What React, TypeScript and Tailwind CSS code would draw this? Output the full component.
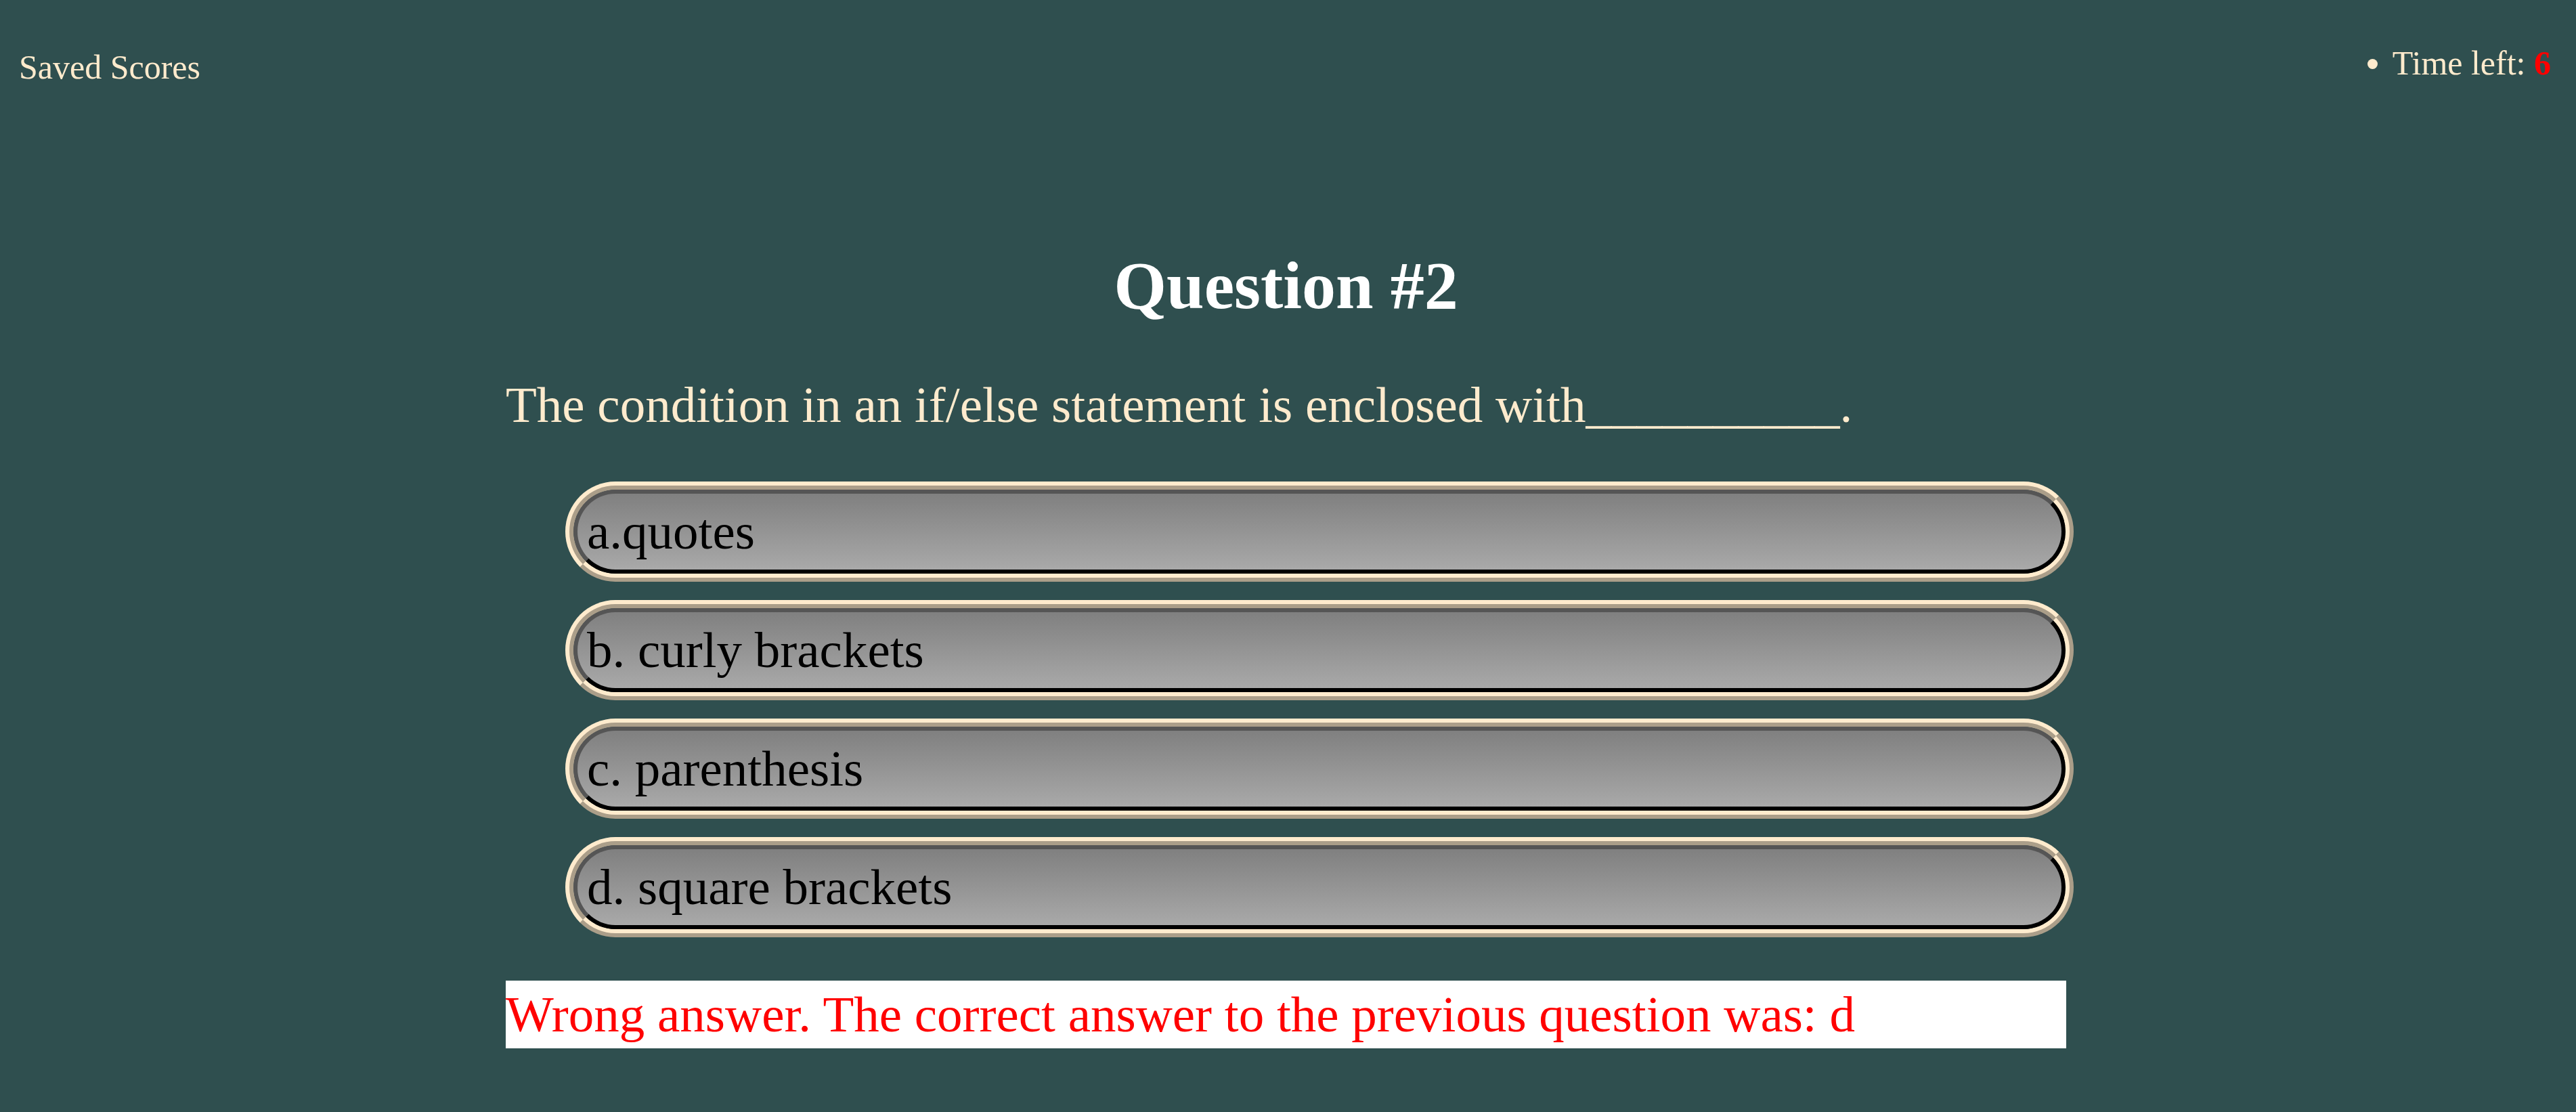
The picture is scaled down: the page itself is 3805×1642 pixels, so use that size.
const choices = ["a.quotes", "b. curly brackets", "c. parenthesis", "d. square brackets"];

export default function App() {
  return (
    <div
      className="min-h-[1642px] w-full bg-[#2f4f4f] text-[#ffebcd]"
      style={{ fontFamily: '"Liberation Serif", "Times New Roman", serif' }}
    >
      <header className="flex h-[130px] items-start justify-between">
        <a className="pl-[28px] pt-[74px] text-[50px] leading-[50px]">Saved Scores</a>
        <ul className="list-disc pr-[37px] pt-[68px] text-[50px] leading-[50px]">
          <li>
            Time left: <span className="font-bold text-[#ff0000]">6</span>
          </li>
        </ul>
      </header>

      <main className="ml-[747px] w-[2305px]">
        <h1 className="mt-[242px] text-center text-[100px] font-bold leading-[100px] text-white">
          Question #2
        </h1>
        <p className="mt-[88px] text-[75px] leading-[75px]">
          The condition in an if/else statement is enclosed with__________.
        </p>

        <div className="ml-[88px] mt-[76px] flex w-[2228px] flex-col gap-[27px]">
          {choices.map((choice) => (
            <div
              key={choice}
              className="rounded-full border-[12px] border-[#ffebcd] [border-style:ridge]"
            >
              <button className="flex h-[124px] w-full items-center rounded-full border-[6px] border-t-[#555555] border-l-[#555555] border-r-black border-b-black bg-gradient-to-b from-[#808080] to-[#a9a9a9] pl-[14px] text-left text-[75px] text-black">
                {choice}
              </button>
            </div>
          ))}
        </div>

        <div className="mt-[64px] h-[100px] bg-white text-[75px] leading-[100px] text-[#ff0000]">
          Wrong answer. The correct answer to the previous question was: d
        </div>
      </main>
    </div>
  );
}
